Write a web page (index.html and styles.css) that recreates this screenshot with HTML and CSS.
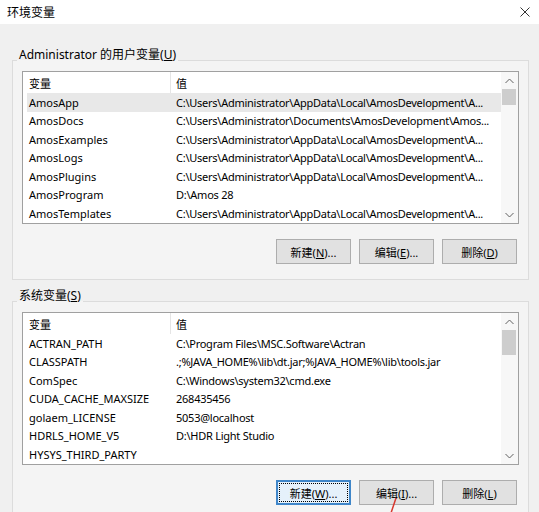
FILE: index.html
```html
<!DOCTYPE html>
<html lang="zh-CN">
<head>
  <meta charset="UTF-8" />
  <meta name="viewport" content="width=device-width, initial-scale=1.0"/>
  <title>环境变量</title>
  <link rel="stylesheet" href="styles.css">
</head>
<body>

  <div class="titlebar">
    <span class="title">环境变量</span>
    <svg class="close" width="10" height="10" viewBox="0 0 10 10">
      <path d="M0.5 0.5L9.5 9.5M9.5 0.5L0.5 9.5" stroke="#333" stroke-width="1" fill="none"/>
    </svg>
  </div>

  <div class="content">

    <!-- user variables -->
    <fieldset class="group">
      <legend>Administrator 的用户变量(<u>U</u>)</legend>
      <div class="listbox">
        <div class="list">
          <div class="list-head"><span>变量</span><span>值</span></div>
          <div class="row selected"><span>AmosApp</span><span>C:\Users\Administrator\AppData\Local\AmosDevelopment\A...</span></div>
          <div class="row"><span>AmosDocs</span><span>C:\Users\Administrator\Documents\AmosDevelopment\Amos...</span></div>
          <div class="row"><span>AmosExamples</span><span>C:\Users\Administrator\AppData\Local\AmosDevelopment\A...</span></div>
          <div class="row"><span>AmosLogs</span><span>C:\Users\Administrator\AppData\Local\AmosDevelopment\A...</span></div>
          <div class="row"><span>AmosPlugins</span><span>C:\Users\Administrator\AppData\Local\AmosDevelopment\A...</span></div>
          <div class="row"><span>AmosProgram</span><span>D:\Amos 28</span></div>
          <div class="row"><span>AmosTemplates</span><span>C:\Users\Administrator\AppData\Local\AmosDevelopment\A...</span></div>
        </div>
        <div class="scrollbar">
          <div class="arrow"><svg width="9" height="6" viewBox="0 0 9 6"><path d="M0.5 5L4.5 1L8.5 5" stroke="#606060" fill="none"/></svg></div>
          <div class="track"><div class="thumb short"></div></div>
          <div class="arrow"><svg width="9" height="6" viewBox="0 0 9 6"><path d="M0.5 1L4.5 5L8.5 1" stroke="#606060" fill="none"/></svg></div>
        </div>
      </div>
      <div class="buttons">
        <button class="btn">新建(<u>N</u>)...</button>
        <button class="btn">编辑(<u>E</u>)...</button>
        <button class="btn">删除(<u>D</u>)</button>
      </div>
    </fieldset>

    <!-- system variables -->
    <fieldset class="group system">
      <legend>系统变量(<u>S</u>)</legend>
      <div class="listbox">
        <div class="list">
          <div class="list-head"><span>变量</span><span>值</span></div>
          <div class="row"><span>ACTRAN_PATH</span><span>C:\Program Files\MSC.Software\Actran</span></div>
          <div class="row"><span>CLASSPATH</span><span>.;%JAVA_HOME%\lib\dt.jar;%JAVA_HOME%\lib\tools.jar</span></div>
          <div class="row"><span>ComSpec</span><span>C:\Windows\system32\cmd.exe</span></div>
          <div class="row"><span>CUDA_CACHE_MAXSIZE</span><span>268435456</span></div>
          <div class="row"><span>golaem_LICENSE</span><span>5053@localhost</span></div>
          <div class="row"><span>HDRLS_HOME_V5</span><span>D:\HDR Light Studio</span></div>
          <div class="row"><span>HYSYS_THIRD_PARTY</span><span></span></div>
        </div>
        <div class="scrollbar">
          <div class="arrow"><svg width="9" height="6" viewBox="0 0 9 6"><path d="M0.5 5L4.5 1L8.5 5" stroke="#606060" fill="none"/></svg></div>
          <div class="track"><div class="thumb"></div></div>
          <div class="arrow"><svg width="9" height="6" viewBox="0 0 9 6"><path d="M0.5 1L4.5 5L8.5 1" stroke="#606060" fill="none"/></svg></div>
        </div>
      </div>
      <div class="buttons">
        <button class="btn default">新建(<u>W</u>)...</button>
        <button class="btn">编辑(<u>I</u>)...</button>
        <button class="btn">删除(<u>L</u>)</button>
      </div>
    </fieldset>

  </div>

  <svg class="pointer" width="10" height="16" viewBox="0 0 10 16">
    <path d="M7 1L2 16" stroke="#d8382f" stroke-width="1.5" fill="none"/>
  </svg>

</body>
</html>
```

FILE: styles.css
```css
body {
  margin: 0;
  position: relative;
  height: 512px;
  overflow: hidden;
  font-family: "Noto Sans", "Noto Sans CJK SC", sans-serif;
  font-size: 11px;
  color: #000;
  background-color: #f0f0f0;
}

.titlebar {
  height: 24px;
  background: #fff;
  display: flex;
  align-items: center;
  justify-content: space-between;
  padding: 0 9px 0 7px;
}

.title {
  font-size: 12px;
}

.content {
  padding: 0 10px 0 12px;
}

.group {
  margin: 23px 0 0;
  padding: 0 0 15px;
  border: 1px solid #dcdcdc;
  background: #f4f4f4;
  min-width: 0;
}

.group.system {
  margin-top: 8px;
}

.group legend {
  margin-left: 4px;
  padding: 0 2px 10px;
  line-height: 16px;
  font-size: 12px;
}

.listbox {
  display: flex;
  box-sizing: border-box;
  width: 497px;
  height: 153px;
  margin: -2px 0 0 9px;
  border: 1px solid #a0a0a0;
  background: #fff;
}

.list {
  flex: 1;
  padding-left: 4px;
  overflow: hidden;
}

.list-head {
  display: grid;
  grid-template-columns: 144px 1fr;
  height: 21px;
}

.list-head span {
  display: flex;
  align-items: center;
}

.list-head span:first-child {
  padding-left: 2px;
  border-right: 1px solid #e5e5e5;
}

.list-head span:last-child {
  padding-left: 5px;
}

.row {
  display: grid;
  grid-template-columns: 147px 1fr;
  height: 18.5px;
  align-items: center;
  white-space: nowrap;
}

.row span {
  padding-left: 2px;
  overflow: hidden;
}

.row span:last-child {
  letter-spacing: -0.25px;
}

.row.selected {
  background: #e8e8e8;
}

.scrollbar {
  width: 17px;
  display: flex;
  flex-direction: column;
  background: #f7f7f7;
}

.arrow {
  height: 17px;
  display: flex;
  align-items: center;
  justify-content: center;
}

.track {
  flex: 1;
}

.thumb {
  height: 25px;
  margin: 0 2px 0 1px;
  background: #cdcdcd;
}

.thumb.short {
  height: 16px;
}

.buttons {
  display: flex;
  justify-content: flex-end;
  gap: 8px;
  margin-top: 15px;
  padding-right: 11px;
}

.btn {
  width: 75px;
  height: 25px;
  padding: 0;
  border: 1px solid #adadad;
  background: #e1e1e1;
  font-family: inherit;
  font-size: 11px;
  color: #000;
}

.btn.default {
  border: 2px solid #3f86c9;
  background: #e5f1fb;
  outline: 1px dotted #000;
  outline-offset: -4px;
}

.pointer {
  position: absolute;
  left: 389px;
  top: 497px;
}
```
